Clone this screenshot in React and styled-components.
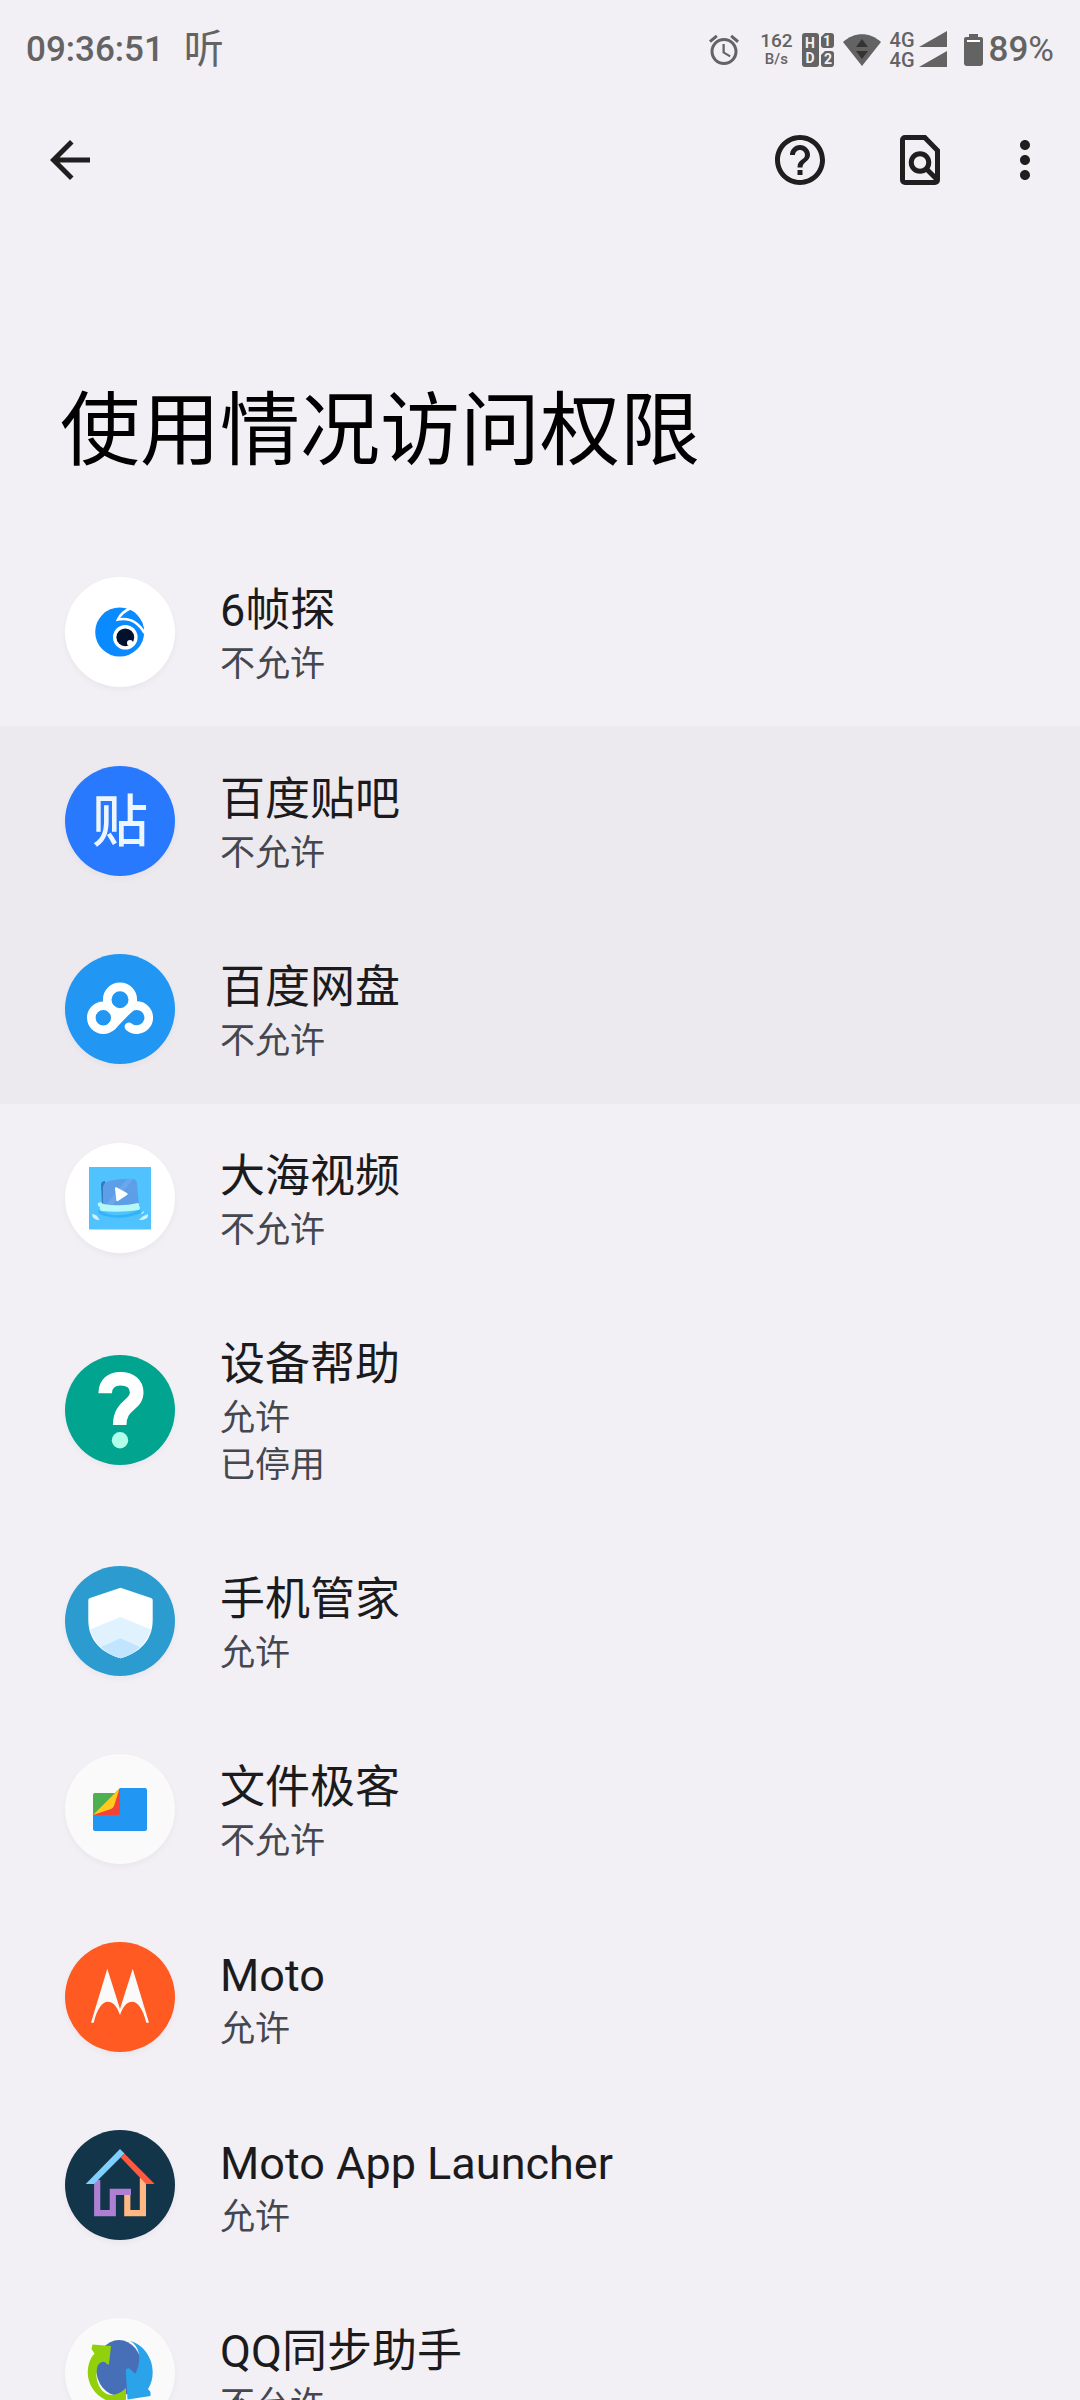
import React from 'react';
import styled, { createGlobalStyle } from 'styled-components';
import { MdAlarm, MdArrowBack, MdHelpOutline, MdMoreVert } from 'react-icons/md';

const GlobalStyle = createGlobalStyle`
  * {
    box-sizing: border-box;
  }
  body {
    margin: 0;
    background: #f2eff5;
    color: #1b1b1d;
    font-family: Roboto, 'Noto Sans CJK SC', sans-serif;
  }
`;

const Screen = styled.div`
  display: flex;
  flex-direction: column;
  height: 100vh;
  overflow: hidden;
`;

const StatusBar = styled.div`
  display: flex;
  align-items: center;
  justify-content: space-between;
  height: 100px;
  flex-shrink: 0;
  padding: 0 26px;
  color: #636363;
  font-size: 35px;
  line-height: 40px;
  font-weight: 500;
`;

const StatusGroup = styled.div`
  display: flex;
  align-items: center;
  gap: ${({ $gap }) => $gap}px;
`;

const Notice = styled.span`
  font-size: 40px;
  font-weight: 400;
`;

const Speed = styled.div`
  display: flex;
  flex-direction: column;
  align-items: center;
  font-size: 19px;
  line-height: 18px;
`;

const SpeedUnit = styled.span`
  font-size: 15px;
`;

const Signals = styled.div`
  display: grid;
  grid-template-columns: auto auto;
  column-gap: 4px;
  font-size: 20px;
  line-height: 20px;
`;

const Battery = styled.div`
  display: flex;
  align-items: center;
  gap: 6px;
`;

const Percent = styled.span`
  font-weight: 400;
`;

const Toolbar = styled.header`
  display: flex;
  align-items: center;
  justify-content: space-between;
  height: 120px;
  flex-shrink: 0;
  padding: 0 25px 0 40px;
`;

const Actions = styled.div`
  display: flex;
  gap: 60px;
`;

const IconButton = styled.button`
  display: flex;
  align-items: center;
  justify-content: center;
  width: 60px;
  height: 60px;
  padding: 0;
  border: 0;
  background: none;
  color: #1f1f1f;
  cursor: pointer;

  &:last-child {
    margin-left: -15px;
  }
`;

const BackButton = styled(IconButton)`
  &:last-child {
    margin-left: 0;
  }
`;

const PageTitle = styled.h1`
  flex-shrink: 0;
  margin: 0;
  padding: 151px 60px 47px;
  color: #000;
  font-size: 80px;
  line-height: 120px;
  font-weight: 400;
`;

const AppList = styled.main`
  flex: 1;
  min-height: 0;
  overflow-y: auto;
  scrollbar-width: none;
`;

const Group = styled.ul`
  margin: 0;
  padding: ${({ $raised }) => ($raised ? '1px 0' : '0')};
  background: ${({ $raised }) => ($raised ? '#edeaef' : 'transparent')};
  list-style: none;
`;

const Row = styled.button`
  display: flex;
  align-items: center;
  gap: 45px;
  width: 100%;
  padding: 38px 65px;
  border: 0;
  background: none;
  color: inherit;
  font: inherit;
  text-align: left;
  cursor: pointer;
`;

const Badge = styled.svg`
  width: 110px;
  height: 110px;
  flex-shrink: 0;
  border-radius: 50%;
  background: ${({ $color }) => $color};
  box-shadow: 0 3px 6px rgba(40, 20, 60, 0.04);
`;

const RowText = styled.span`
  display: flex;
  flex-direction: column;
  padding-top: 4px;
`;

const Name = styled.span`
  font-size: 45px;
  line-height: 61px;
`;

const Detail = styled.span`
  color: #44474f;
  font-size: 35px;
  line-height: 47px;
`;

const HdIcon = () => (
  <svg width="32" height="34" viewBox="0 0 32 34" aria-hidden="true">
    <g fill="#636363">
      <rect x="0" y="0" width="17" height="34" rx="3" />
      <path d="M23 0h6a3 3 0 0 1 3 3v9a3 3 0 0 1-3 3h-7a3 3 0 0 1-3-3V4z" />
      <path d="M23 18h6a3 3 0 0 1 3 3v10a3 3 0 0 1-3 3h-7a3 3 0 0 1-3-3v-9z" />
    </g>
    <g fill="#f2eff5" fontFamily="Roboto, sans-serif" fontWeight="700" fontSize="14" textAnchor="middle">
      <text x="8" y="15">H</text>
      <text x="8" y="30">D</text>
      <text x="25" y="13">1</text>
      <text x="26" y="31">2</text>
    </g>
  </svg>
);

const WifiIcon = () => (
  <svg width="38" height="32" viewBox="0 0 38 32" aria-hidden="true">
    <path d="M0 8C11-2.500 27-2.500 38 8L19 32z" fill="#636363" />
    <path d="M13 13l6-8 6 8zM13 17h12l-6 8z" fill="#333" />
  </svg>
);

const SignalIcon = () => (
  <svg width="28" height="20" viewBox="0 0 28 20" aria-hidden="true">
    <path d="M28 1v16H0z" fill="#636363" />
  </svg>
);

const BatteryIcon = () => (
  <svg width="19" height="32" viewBox="0 0 19 32" aria-hidden="true">
    <path d="M5 0h9v3h3a2 2 0 0 1 2 2v24a3 3 0 0 1-3 3H3a3 3 0 0 1-3-3V5a2 2 0 0 1 2-2h3z" fill="#636363" />
    <path d="M3 6h13v2H3z" fill="#fff" />
  </svg>
);

const FindInPageIcon = () => (
  <svg width="60" height="60" viewBox="0 0 24 24" fill="none" stroke="currentColor" strokeWidth="2" aria-hidden="true">
    <path d="M6 3h7.900L19 8.200V20a1 1 0 0 1-1 1H6a1 1 0 0 1-1-1V4a1 1 0 0 1 1-1z" />
    <circle cx="12" cy="13" r="3.500" />
    <path d="M14.400 15.400L19 20" />
  </svg>
);

const EyeLogo = () => (
  <>
    <circle cx="54.700" cy="55" r="24.500" fill="#0a8aff" />
    <path d="M66 33.500Q77 40 79.300 54L74 48z" fill="#0a8aff" />
    <path d="M66 31Q56.500 35 53 42.500Q70 39.500 79.500 56" fill="none" stroke="#fff" strokeWidth="2.600" />
    <circle cx="60.300" cy="60.300" r="12.300" fill="#fff" />
    <circle cx="60.300" cy="60.300" r="8.900" fill="#02122e" />
    <circle cx="65" cy="66" r="3" fill="#fff" />
  </>
);

const TiebaLogo = () => (
  <text x="55" y="75" fill="#edf5ff" fontFamily="'Noto Sans CJK SC', sans-serif" fontWeight="500" fontSize="56" textAnchor="middle">
    贴
  </text>
);

const CloudLogo = () => (
  <>
    <g fill="none" stroke="#fff" strokeWidth="8.600" strokeLinecap="round">
      <circle cx="55" cy="45.700" r="12.800" />
      <circle cx="38.300" cy="63.700" r="12" />
      <path d="M46.800 72.200L63.200 55.200A12 12 0 1 1 63.900 72.700" />
    </g>
    <path d="M47 55l8 4 9-4-14 16-1-10z" fill="#fff" />
  </>
);

const SeaVideoLogo = () => (
  <>
    <path d="M24 24h62v62.500H24z" fill="#50c3fe" />
    <path d="M33 67q21 11 42-1l1 4q-21 9-42 1z" fill="#32b2fa" />
    <path d="M36 42q0-4 4-4l2 24h-5z" fill="#3879b8" />
    <path d="M38 44q1-5 6-6 13-3 25-2 3 1 3 5l2 22q-18 5-36 0z" fill="#5c9fe8" />
    <path d="M62 36h6L48 62h-7z" fill="#73aeec" opacity=".6" />
    <path d="M33 60q3-2 5 1 18 3 35-1 2 1 1 3 2 2 0 4-19 3-37 1-3-1-2-4-3-1-2-4z" fill="#b5f8f8" />
    <path d="M50 45.500q0-2 2-1l10 5.500q1.500 1 0 2l-9 6q-1.500 1-1.700-1z" fill="#fff" />
    <path d="M27 71q5 0 7.500 6-7 0-7.500-6zM83 71q1 6-9 6 3-4 9-6zM79 68q0 3-3 3 1-2 3-3z" fill="#d3f1ff" />
  </>
);

const HelpLogo = () => (
  <>
    <path
      d="M40.200 38.300C40.200 28.500 46.500 23.800 55.500 23.800C65.500 23.800 71.700 29 71.700 37.500C71.700 51 54.700 49 54.700 70"
      fill="none"
      stroke="#fff"
      strokeWidth="13.600"
    />
    <circle cx="55" cy="85.300" r="8.200" fill="#b0ffeb" />
  </>
);

const ShieldLogo = () => (
  <>
    <path d="M55.500 21.700L86 32q1.700.600 1.700 2v20C87.700 75 74 87 55.500 92.300C37 87 23.300 75 23.300 54V34q0-1.400 1.700-2z" fill="#fff" />
    <path d="M55.500 51L86 63.500C81 79 70 88 55.500 92.300C41 88 30 79 25 63.500z" fill="#e1f2ff" />
    <path d="M55.500 72.300L75 81Q67 89 55.500 92.300Q44 89 36 81z" fill="#c1e5ff" />
  </>
);

const FilesLogo = () => (
  <>
    <path d="M55 34h25q2 0 2 2v39q0 2-2 2H30q-2 0-2-2V60h27z" fill="#2196f3" />
    <path d="M30 39h25v22H28V41q0-2 2-2z" fill="#4caf50" />
    <path d="M55 34v25q0 2-2 2H28z" fill="#f44336" />
    <path d="M54.500 34.500L28 61l18-6q2-1 3-3z" fill="#ffca1f" />
  </>
);

const BatwingLogo = () => (
  <path
    d="M26 80.700L42.300 26.700L55 67L67.700 26.700L84 80.700H81.300C78 66 72 59.700 67.500 59.700C61 59.700 57.500 66 55 73C52.500 66 49 59.700 42.500 59.700C38 59.700 32 66 28.700 80.700z"
    fill="#fafafa"
  />
);

const HouseLogo = () => (
  <>
    <path d="M32.200 50v33.200h15.600V61.800H66" fill="none" stroke="#ae7fd3" strokeWidth="6.200" />
    <path d="M62.300 65v18.200h15.600V48" fill="none" stroke="#ffb784" strokeWidth="6.200" />
    <path d="M20.700 54L55 19l4.500 4.500L29 54z" fill="#7fd0ff" />
    <path d="M55.500 27.200l3.800-3.700L89.700 54H81z" fill="#ff5a40" />
  </>
);

const SyncLogo = () => (
  <>
    <ellipse cx="54" cy="50" rx="23" ry="28" fill="#466fb8" />
    <path d="M65 22.700C79 27 87.700 40 87.700 54Q87.700 64 83 71l2.500 3v4l-23 3.500L60.700 52q2-3 4.500-1l4 4q2 1 2.500-2C77 39 74 28 65 22.700z" fill="#2ba3ea" />
    <path d="M27.500 26.500L46 28l-2 18q-1 1-2 0-4-5-9 1C28 60 35 77 47 77q8-1 14-7v17C40 86 22.700 74 22.700 54Q23 42 29.500 35.500L26.500 31z" fill="#92d00c" />
  </>
);

const groups = [
  {
    id: 'first',
    apps: [{ name: '6帧探', details: ['不允许'], color: '#fff', Logo: EyeLogo }],
  },
  {
    id: 'baidu',
    raised: true,
    apps: [
      { name: '百度贴吧', details: ['不允许'], color: '#2979ff', Logo: TiebaLogo },
      { name: '百度网盘', details: ['不允许'], color: '#2196f3', Logo: CloudLogo },
    ],
  },
  {
    id: 'others',
    apps: [
      { name: '大海视频', details: ['不允许'], color: '#fff', Logo: SeaVideoLogo },
      { name: '设备帮助', details: ['允许', '已停用'], color: '#00a48f', Logo: HelpLogo },
      { name: '手机管家', details: ['允许'], color: '#2b9bd0', Logo: ShieldLogo },
      { name: '文件极客', details: ['不允许'], color: '#fafafa', Logo: FilesLogo },
      { name: 'Moto', details: ['允许'], color: '#ff5a22', Logo: BatwingLogo },
      { name: 'Moto App Launcher', details: ['允许'], color: '#123549', Logo: HouseLogo },
      { name: 'QQ同步助手', details: ['不允许'], color: '#fafafa', Logo: SyncLogo },
    ],
  },
];

export default function App() {
  return (
    <>
      <GlobalStyle />
      <Screen>
        <StatusBar>
          <StatusGroup $gap={20}>
            <span>09:36:51</span>
            <Notice>听</Notice>
          </StatusGroup>
          <StatusGroup $gap={9}>
            <StatusGroup $gap={18}>
              <MdAlarm size={36} aria-hidden="true" />
              <Speed>
                <span>162</span>
                <SpeedUnit>B/s</SpeedUnit>
              </Speed>
            </StatusGroup>
            <HdIcon />
            <WifiIcon />
            <StatusGroup $gap={17}>
              <Signals>
                <span>4G</span>
                <SignalIcon />
                <span>4G</span>
                <SignalIcon />
              </Signals>
              <Battery>
                <BatteryIcon />
                <span>
                  89<Percent>%</Percent>
                </span>
              </Battery>
            </StatusGroup>
          </StatusGroup>
        </StatusBar>
        <Toolbar>
          <BackButton type="button" aria-label="返回">
            <MdArrowBack size={60} />
          </BackButton>
          <Actions>
            <IconButton type="button" aria-label="帮助">
              <MdHelpOutline size={60} />
            </IconButton>
            <IconButton type="button" aria-label="搜索">
              <FindInPageIcon />
            </IconButton>
            <IconButton type="button" aria-label="更多选项">
              <MdMoreVert size={60} />
            </IconButton>
          </Actions>
        </Toolbar>
        <PageTitle>使用情况访问权限</PageTitle>
        <AppList>
          {groups.map(({ id, raised, apps }) => (
            <Group key={id} $raised={raised}>
              {apps.map(({ name, details, color, Logo }) => (
                <li key={name}>
                  <Row type="button">
                    <Badge viewBox="0 0 110 110" $color={color} aria-hidden="true">
                      <Logo />
                    </Badge>
                    <RowText>
                      <Name>{name}</Name>
                      {details.map((detail) => (
                        <Detail key={detail}>{detail}</Detail>
                      ))}
                    </RowText>
                  </Row>
                </li>
              ))}
            </Group>
          ))}
        </AppList>
      </Screen>
    </>
  );
}
